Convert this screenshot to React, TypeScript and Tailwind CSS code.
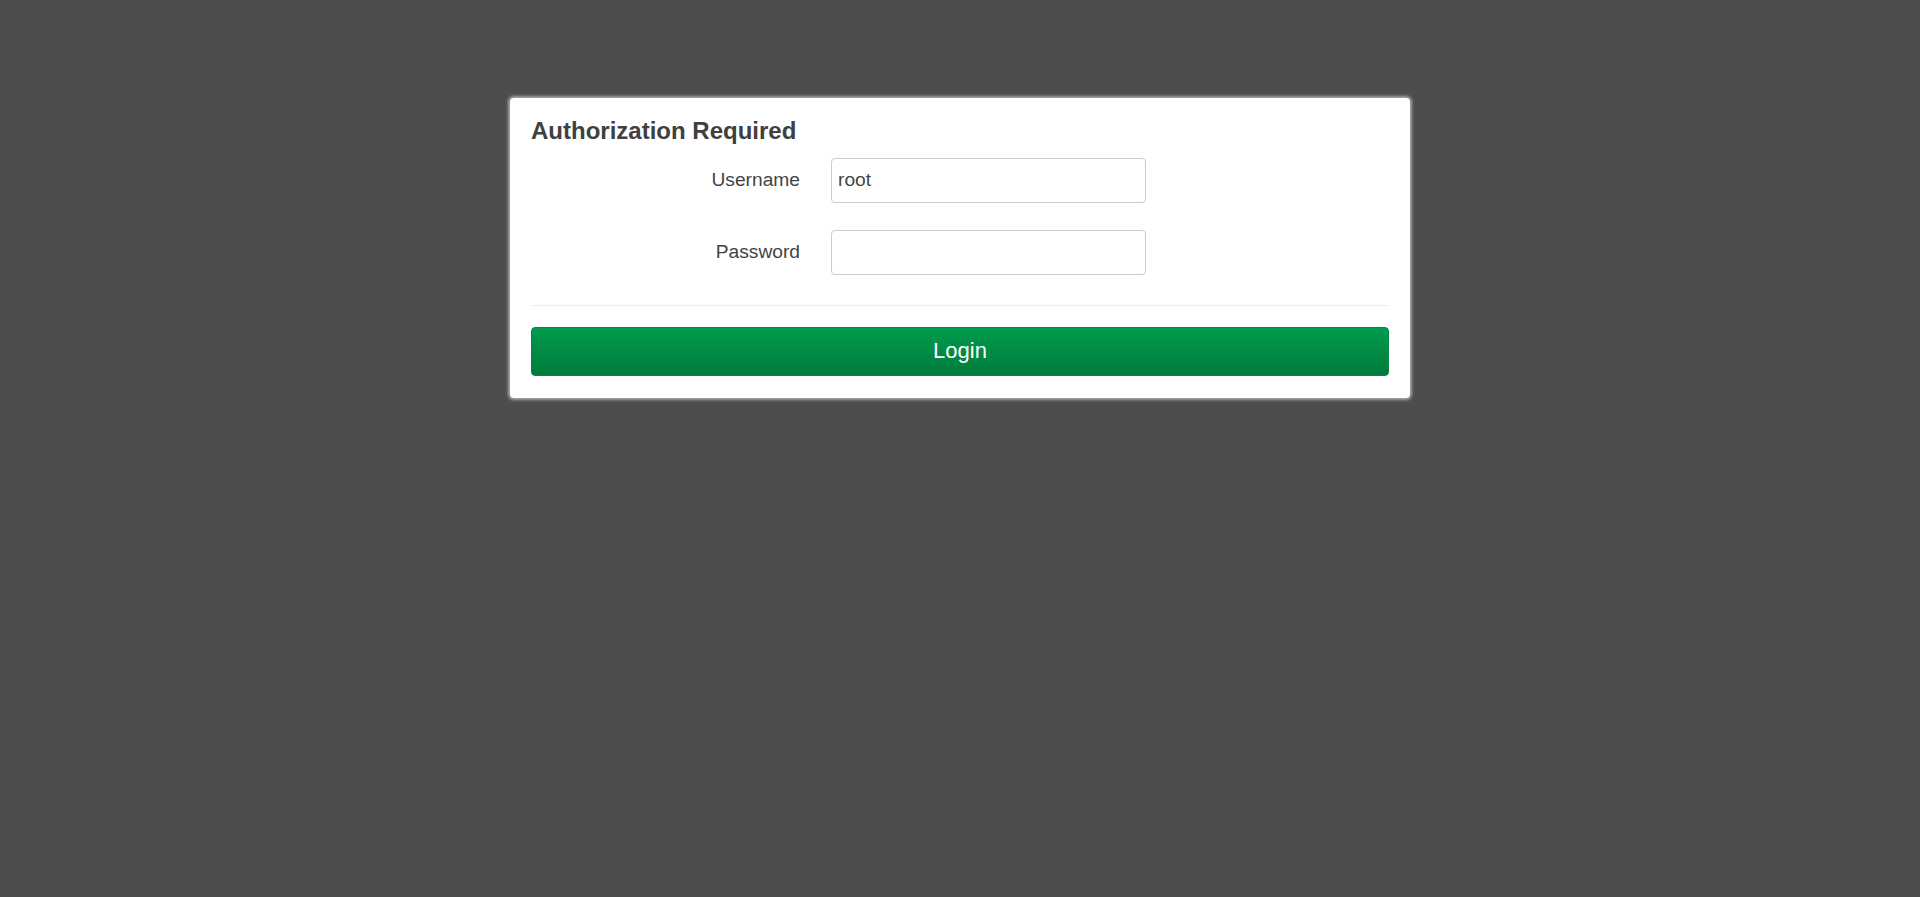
import React from "react";

export default function App() {
  return (
    <div
      className="min-h-[897px] w-full bg-[#4d4d4d] pt-[98px]"
      style={{ fontFamily: '"Liberation Sans", Arial, sans-serif' }}
    >
      <div className="mx-auto w-[900px] rounded-[4px] bg-white px-[21px] pb-[22px] pt-[19px] text-[#404040] shadow-[0_0_3px_2px_#a8a8a8]">
        <h2 className="text-[24px] font-bold leading-[28.8px]">Authorization Required</h2>
        <div className="mt-[12px] flex flex-col gap-[27px]">
          <div className="flex items-center">
            <label className="w-[269px] text-right text-[19.2px] leading-[24px] text-[#444444]">Username</label>
            <input
              defaultValue="root"
              className="ml-[31px] h-[45px] w-[315px] rounded-[4px] border border-[#cccccc] px-[6px] text-[19.2px] text-[#444444] outline-none"
              style={{ fontFamily: '"Liberation Sans", Arial, sans-serif' }}
            />
          </div>
          <div className="flex items-center">
            <label className="w-[269px] text-right text-[19.2px] leading-[24px] text-[#444444]">Password</label>
            <input
              type="password"
              className="ml-[31px] h-[45px] w-[315px] rounded-[4px] border border-[#cccccc] px-[6px] text-[19.2px] outline-none"
            />
          </div>
        </div>
        <div className="mt-[30px] h-px bg-[#eeeeee]" />
        <button className="mt-[21px] flex h-[49px] w-full items-center justify-center rounded-[4px] border border-[#008a44] bg-gradient-to-b from-[#009c4e] to-[#007b3c] pb-[2px] text-[22px] text-white">
          Login
        </button>
      </div>
    </div>
  );
}
